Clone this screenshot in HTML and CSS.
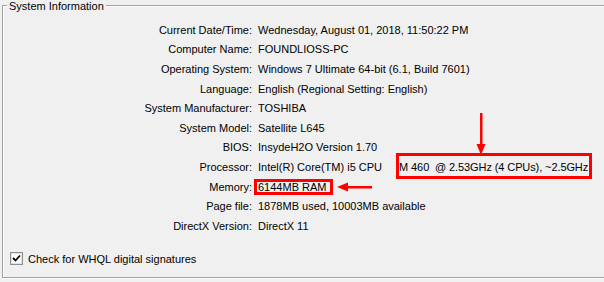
FILE: index.html
```html
<!DOCTYPE html>
<html lang="en">
<head>
    <meta charset="UTF-8">
    <title>DirectX Diagnostic Tool</title>
    <link rel="stylesheet" href="styles.css">
</head>
<body>
<div class="page">
    <div class="group">
        <span class="group-title">System Information</span>
        <div class="info">
            <div class="label">Current Date/Time:</div><div class="value">Wednesday, August 01, 2018, 11:50:22 PM</div>
            <div class="label">Computer Name:</div><div class="value">FOUNDLIOSS-PC</div>
            <div class="label">Operating System:</div><div class="value">Windows 7 Ultimate 64-bit (6.1, Build 7601)</div>
            <div class="label">Language:</div><div class="value">English (Regional Setting: English)</div>
            <div class="label">System Manufacturer:</div><div class="value">TOSHIBA</div>
            <div class="label">System Model:</div><div class="value">Satellite L645</div>
            <div class="label">BIOS:</div><div class="value">InsydeH2O Version 1.70</div>
            <div class="label">Processor:</div><div class="value">Intel(R) Core(TM) i5 CPU<span class="cpu-rest">M 460&nbsp; @ 2.53GHz (4 CPUs), ~2.5GHz</span></div>
            <div class="label">Memory:</div><div class="value">6144MB RAM</div>
            <div class="label">Page file:</div><div class="value">1878MB used, 10003MB available</div>
            <div class="label">DirectX Version:</div><div class="value">DirectX 11</div>
        </div>
        <label class="check">
            <span class="check-box">
                <svg width="9" height="9" viewBox="0 0 9 9"><path d="M1 4 L3.5 6.5 L8 1.5" fill="none" stroke="#000" stroke-width="1.8"/></svg>
            </span>
            Check for WHQL digital signatures
        </label>
    </div>

    <!-- annotations drawn over the screenshot -->
    <div class="mark mark-cpu"></div>
    <div class="mark mark-ram"></div>
    <svg class="arrow arrow-down" width="12" height="44" viewBox="0 0 12 44">
        <rect x="5" y="0" width="2.5" height="33" fill="#f00"/>
        <polygon points="1.5,31 10.5,31 6,42" fill="#f00"/>
    </svg>
    <svg class="arrow arrow-left" width="36" height="10" viewBox="0 0 36 10">
        <rect x="9" y="4" width="26" height="2.5" fill="#f00"/>
        <polygon points="0,5 11,0.5 11,9.5" fill="#f00"/>
    </svg>
</div>
</body>
</html>
```

FILE: styles.css
```css
html, body {
    margin: 0;
    padding: 0;
    background: #f0f0f0;
    overflow: hidden;
}

.page {
    position: relative;
    width: 604px;
    height: 282px;
    overflow: hidden;
    font-family: "Liberation Sans", Arial, sans-serif;
    font-size: 11px;
    color: #000;
}

.group {
    position: relative;
    box-sizing: border-box;
    margin: 5px 0 0 2px;
    width: 640px;
    height: 273px;
    border: 1px solid #a0a0a0;
    box-shadow: inset 1px 1px 0 #fff, 0 1px 0 #fff;
}

.group-title {
    position: absolute;
    top: -6px;
    left: 4px;
    padding: 0 2px;
    background: #f0f0f0;
    line-height: 12px;
}

.info {
    display: grid;
    grid-template-columns: 249px 1fr;
    grid-auto-rows: 19.6px;
    column-gap: 6px;
    align-items: center;
    padding-top: 14px;
}

.label {
    text-align: right;
    white-space: nowrap;
}

.value {
    white-space: nowrap;
}

.cpu-rest {
    margin-left: 17px;
    letter-spacing: -0.1px;
}

.check {
    display: flex;
    align-items: center;
    gap: 5px;
    height: 19.6px;
    margin-top: 13.4px;
    padding-left: 7px;
}

.check-box {
    display: flex;
    align-items: center;
    justify-content: center;
    box-sizing: border-box;
    width: 13px;
    height: 13px;
    border: 1px solid #8e8f8f;
    background: #fff;
    box-shadow: inset 0 0 0 1px #e2e2e2;
}

.mark {
    position: absolute;
    box-sizing: border-box;
    border: 3px solid #f00;
}

.mark-cpu {
    left: 396px;
    top: 153px;
    width: 196px;
    height: 26px;
}

.mark-ram {
    left: 254px;
    top: 179px;
    width: 79px;
    height: 16px;
}

.arrow {
    position: absolute;
}

.arrow-down {
    left: 475px;
    top: 113px;
}

.arrow-left {
    left: 337px;
    top: 182px;
}
```
